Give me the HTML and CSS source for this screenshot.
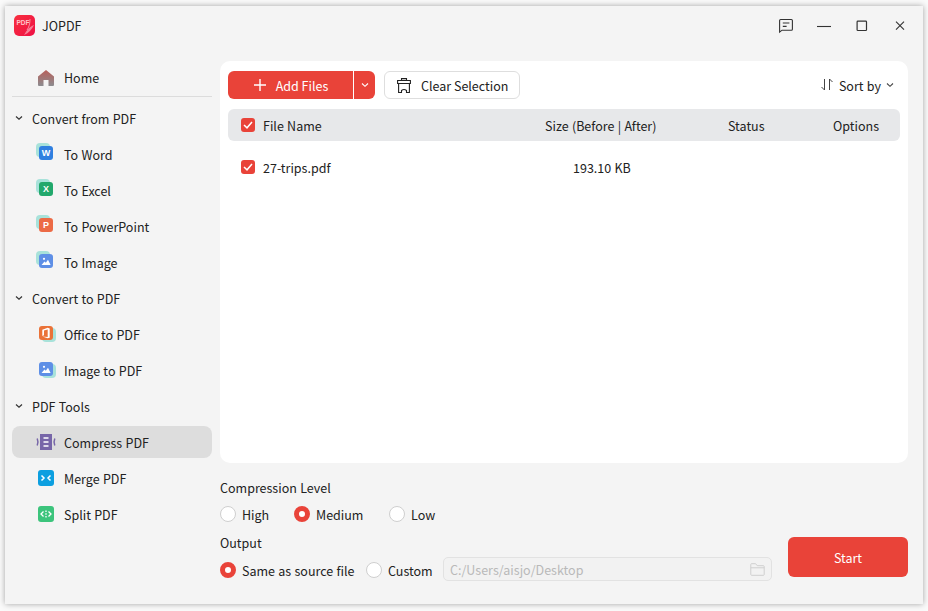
FILE: index.html
```html
<!DOCTYPE html>
<html lang="en">
<head>
    <meta charset="UTF-8">
    <meta name="viewport" content="width=device-width, initial-scale=1.0">
    <title>JOPDF</title>
    <link rel="stylesheet" href="styles.css">
</head>
<body>
    <div class="window">
        <!-- Title bar -->
        <header class="titlebar">
            <div class="logo">
                <svg width="21" height="21" viewBox="0 0 21 21">
                    <defs>
                        <linearGradient id="logo-red" x1="0" y1="0" x2="1" y2="1">
                            <stop offset="0" stop-color="#f8303f"/>
                            <stop offset="1" stop-color="#ee1045"/>
                        </linearGradient>
                    </defs>
                    <rect width="21" height="21" rx="5" fill="url(#logo-red)"/>
                    <path d="M10 20c3-5 5-8 10-10-2 4-5 8-10 10z" fill="#fff" opacity=".45"/>
                    <path d="M13 15c2-3 3-6 3-11" stroke="#fff" stroke-width=".8" fill="none" opacity=".6"/>
                    <text x="2.4" y="9.8" class="logo-text">PDF</text>
                </svg>
            </div>
            <span class="app-name">JOPDF</span>
            <div class="win-controls">
                <svg width="16" height="16" viewBox="0 0 16 16" fill="none" stroke="#333" stroke-width="1.1">
                    <path d="M1.6 14.2V2.5q0-1 1-1h10.8q1 0 1 1v8.7q0 1-1 1H4z"/>
                    <path d="M4.8 5h6.6M4.8 8.4h3.8"/>
                </svg>
                <svg width="16" height="16" viewBox="0 0 16 16" fill="none" stroke="#333" stroke-width="1.1">
                    <path d="M1 8.5h14"/>
                </svg>
                <svg width="16" height="16" viewBox="0 0 16 16" fill="none" stroke="#333" stroke-width="1.2">
                    <rect x="3.1" y="3.1" width="9.4" height="9.4" rx=".8"/>
                </svg>
                <svg width="16" height="16" viewBox="0 0 16 16" fill="none" stroke="#333" stroke-width="1.1">
                    <path d="M4 3.6l8 8M12 3.6l-8 8"/>
                </svg>
            </div>
        </header>

        <div class="content">
            <!-- Sidebar -->
            <nav class="sidebar">
                <div class="nav-item home">
                    <svg class="nav-icon" width="16" height="16" viewBox="0 0 16 16">
                        <defs>
                            <linearGradient id="home-grad" x1="0" y1="0" x2="0" y2="1">
                                <stop offset="0" stop-color="#b8605a"/>
                                <stop offset="1" stop-color="#8c8c90"/>
                            </linearGradient>
                        </defs>
                        <path d="M8 0l8 6.4V15a1 1 0 0 1-1 1h-4.500v-6h-5v6H1a1 1 0 0 1-1-1V6.400z" fill="url(#home-grad)"/>
                    </svg>
                    <span>Home</span>
                </div>

                <div class="group-title">
                    <svg class="chevron" width="8" height="6" viewBox="0 0 8 6"><path d="M1 1.5l3 2.800 3-2.800" fill="none" stroke="#333" stroke-width="1.2"/></svg>
                    <span>Convert from PDF</span>
                </div>
                <div class="nav-item">
                    <span class="doc-icon back-tl"><i class="tile word">W</i></span>
                    <span>To Word</span>
                </div>
                <div class="nav-item">
                    <span class="doc-icon back-tl"><i class="tile excel">X</i></span>
                    <span>To Excel</span>
                </div>
                <div class="nav-item">
                    <span class="doc-icon back-tl"><i class="tile ppt">P</i></span>
                    <span>To PowerPoint</span>
                </div>
                <div class="nav-item">
                    <span class="doc-icon back-tl">
                        <i class="tile image">
                            <svg width="14" height="14" viewBox="0 0 14 14"><circle cx="5" cy="4.800" r="1.100" fill="#fff"/><path d="M2.5 11l3-3.500 1.300 1.300L9 5.800l2.600 5.200z" fill="#fff"/></svg>
                        </i>
                    </span>
                    <span>To Image</span>
                </div>

                <div class="group-title">
                    <svg class="chevron" width="8" height="6" viewBox="0 0 8 6"><path d="M1 1.5l3 2.800 3-2.800" fill="none" stroke="#333" stroke-width="1.2"/></svg>
                    <span>Convert to PDF</span>
                </div>
                <div class="nav-item">
                    <span class="doc-icon back-br">
                        <i class="tile office">
                            <svg width="14" height="14" viewBox="0 0 14 14"><path d="M3.300 3.700L8.700 1.800l2 .6v9.300l-2 .6-5.400-1.900 5.400.6V3.500L5 4.400v4.800l-1.700.7z" fill="#fff"/></svg>
                        </i>
                    </span>
                    <span>Office to PDF</span>
                </div>
                <div class="nav-item">
                    <span class="doc-icon back-br">
                        <i class="tile image">
                            <svg width="14" height="14" viewBox="0 0 14 14"><circle cx="5" cy="4.800" r="1.100" fill="#fff"/><path d="M2.5 11l3-3.500 1.300 1.300L9 5.800l2.600 5.200z" fill="#fff"/></svg>
                        </i>
                    </span>
                    <span>Image to PDF</span>
                </div>

                <div class="group-title">
                    <svg class="chevron" width="8" height="6" viewBox="0 0 8 6"><path d="M1 1.5l3 2.800 3-2.800" fill="none" stroke="#333" stroke-width="1.2"/></svg>
                    <span>PDF Tools</span>
                </div>
                <div class="nav-item active">
                    <svg class="nav-icon" width="20" height="16" viewBox="0 0 20 16">
                        <rect x="4" y="0" width="12" height="16" fill="#7766a8"/>
                        <path d="M7.500 4h5M7.500 8h5M7.500 12h5" stroke="#fff" stroke-width="1.500"/>
                        <path d="M1.200 4.500q1.500 3.500 0 7M18.800 4.500q-1.500 3.500 0 7" fill="none" stroke="#7766a8" stroke-width="1.500"/>
                    </svg>
                    <span>Compress PDF</span>
                </div>
                <div class="nav-item">
                    <svg class="nav-icon" width="16" height="16" viewBox="0 0 16 16">
                        <rect width="16" height="16" rx="3" fill="#0c9fe0"/>
                        <path d="M3.500 5.500L6 8l-2.500 2.500M12.500 5.500L10 8l2.500 2.500" fill="none" stroke="#fff" stroke-width="1.500"/>
                    </svg>
                    <span>Merge PDF</span>
                </div>
                <div class="nav-item">
                    <svg class="nav-icon" width="16" height="16" viewBox="0 0 16 16">
                        <rect width="16" height="16" rx="3" fill="#3cc47c"/>
                        <path d="M5.500 5.500L3 8l2.500 2.500M10.500 5.500L13 8l-2.500 2.500M8 4.500v1.500M8 7.200v1.600M8 10v1.500" fill="none" stroke="#fff" stroke-width="1.300"/>
                    </svg>
                    <span>Split PDF</span>
                </div>
            </nav>

            <main class="main">
                <section class="panel">
                    <div class="toolbar">
                        <div class="add-group">
                            <button class="add-btn">
                                <svg width="14" height="14" viewBox="0 0 14 14"><path d="M7 1v12M1 7h12" stroke="#fff" stroke-width="1.400"/></svg>
                                <span>Add Files</span>
                            </button>
                            <button class="add-more">
                                <svg width="8" height="6" viewBox="0 0 8 6"><path d="M1 1.5l3 2.800 3-2.800" fill="none" stroke="#fff" stroke-width="1.100"/></svg>
                            </button>
                        </div>
                        <button class="clear-btn">
                            <svg width="14" height="15" viewBox="0 0 14 15" fill="none" stroke="#222" stroke-width="1.100">
                                <path d="M4.500 2.500V.6h5v1.900M.6 2.500h12.800v3H.6zM1.600 5.500v9h2.900v-2q2.500-2 5 0v2h2.900v-9"/>
                            </svg>
                            <span>Clear Selection</span>
                        </button>
                        <div class="sort">
                            <svg width="14" height="12" viewBox="0 0 14 12" fill="none" stroke="#444" stroke-width="1">
                                <path d="M4.500 0v11L1.500 8M9.500 11V0l3 3"/>
                            </svg>
                            <span>Sort by</span>
                            <svg width="8" height="6" viewBox="0 0 8 6"><path d="M1 1.5l3 2.800 3-2.800" fill="none" stroke="#444" stroke-width="1.100"/></svg>
                        </div>
                    </div>

                    <div class="file-row file-head">
                        <span class="check"><svg width="10" height="8" viewBox="0 0 10 8"><path d="M1 4l3 2.800L9 1" fill="none" stroke="#fff" stroke-width="1.500"/></svg></span>
                        <span class="col-name">File Name</span>
                        <span class="col-size">Size (Before | After)</span>
                        <span class="col-status">Status</span>
                        <span class="col-options">Options</span>
                    </div>
                    <div class="file-row">
                        <span class="check"><svg width="10" height="8" viewBox="0 0 10 8"><path d="M1 4l3 2.800L9 1" fill="none" stroke="#fff" stroke-width="1.500"/></svg></span>
                        <span class="col-name">27-trips.pdf</span>
                        <span class="col-size">193.10 KB</span>
                    </div>
                </section>

                <section class="settings">
                    <div class="settings-left">
                        <div class="label first">Compression Level</div>
                        <div class="radios level">
                            <span class="radio"></span><span class="radio-text high">High</span>
                            <span class="radio on"></span><span class="radio-text medium">Medium</span>
                            <span class="radio"></span><span class="radio-text">Low</span>
                        </div>
                        <div class="label">Output</div>
                        <div class="radios output">
                            <span class="radio on"></span><span class="radio-text same">Same as source file</span>
                            <span class="radio"></span><span class="radio-text custom">Custom</span>
                            <div class="path">
                                <span>C:/Users/aisjo/Desktop</span>
                                <svg width="15" height="13" viewBox="0 0 15 13" fill="none" stroke="#cfcfcf" stroke-width="1">
                                    <path d="M.8 11.500V1.500q0-.8.8-.8h4l1.600 2h6.200q.8 0 .8.800v8q0 .8-.8.800H1.600q-.8 0-.8-.8zM.8 4.800h13.400"/>
                                </svg>
                            </div>
                        </div>
                    </div>
                    <button class="start-btn">Start</button>
                </section>
            </main>
        </div>
    </div>
</body>
</html>
```

FILE: styles.css
```css
* {
    margin: 0;
    padding: 0;
    box-sizing: border-box;
}

body {
    width: 928px;
    height: 611px;
    padding: 6px 5px 7px;
    background: #fafafa;
    font-family: "Noto Sans CJK SC", "Noto Sans", sans-serif;
    font-size: 12.5px;
    word-spacing: 0.5px;
    color: #222;
    overflow: hidden;
}

.window {
    width: 918px;
    height: 598px;
    background: #f4f4f4;
    box-shadow: 0 0 6px rgba(0, 0, 0, 0.35);
}

.titlebar {
    height: 55px;
    padding: 9px 15px 0 9px;
    display: flex;
    align-items: flex-start;
}

.logo {
    width: 21px;
    height: 21px;
}

.logo-text {
    font-family: "Liberation Sans", sans-serif;
    font-size: 6.5px;
    font-weight: bold;
    fill: #ffc5cc;
}

.app-name {
    margin-left: 7px;
    line-height: 22px;
}

.win-controls {
    margin-left: auto;
    display: flex;
    gap: 22px;
    margin-top: 3px;
}

.content {
    display: flex;
    gap: 8px;
    padding: 0 15px 0 7px;
}

.sidebar {
    width: 200px;
    margin-top: -2px;
}

.nav-item {
    height: 36px;
    display: flex;
    align-items: center;
    padding-left: 26px;
    position: relative;
}

.nav-item > span:last-child {
    position: absolute;
    left: 52px;
}

.nav-item.active {
    height: 32px;
    margin: 2px 0;
    padding-left: 24px;
    background: #dddddd;
    border-radius: 8px;
}

.home {
    height: 38px;
    border-bottom: 1px solid #dcdcdc;
    margin-bottom: 3px;
}

.nav-icon {
    flex-shrink: 0;
}

.group-title {
    height: 36px;
    display: flex;
    align-items: center;
    gap: 9px;
    padding-left: 3px;
}

.chevron {
    margin-top: -1px;
}

.doc-icon {
    width: 17px;
    height: 17px;
    margin-left: 1px;
    position: relative;
    display: block;
}

.doc-icon::before {
    content: "";
    position: absolute;
    width: 14px;
    height: 14px;
    border-radius: 4px;
    background: #a8e2da;
}

.doc-icon.back-tl::before {
    left: -3px;
    top: -3px;
}

.doc-icon.back-br::before {
    left: 3px;
    top: 2px;
}

.tile {
    position: absolute;
    left: 0;
    top: 0;
    width: 14px;
    height: 14px;
    border-radius: 3px;
    display: flex;
    align-items: center;
    justify-content: center;
    color: #fff;
    font-style: normal;
    font-weight: bold;
    font-size: 9px;
    font-family: "Liberation Sans", sans-serif;
}

.word { background: #2f7fe0; }
.excel { background: #22a86c; }
.ppt { background: #ec6a45; }
.image { background: #5e8fe6; }
.office { background: #ea7238; }

.main {
    width: 688px;
}

.panel {
    height: 402px;
    background: #fff;
    border-radius: 10px;
    padding: 10px 8px;
}

.toolbar {
    height: 28px;
    display: flex;
    align-items: center;
    margin-bottom: 10px;
}

.add-group {
    display: flex;
    height: 28px;
}

.add-btn {
    width: 125px;
    background: #e94339;
    border: none;
    border-radius: 6px 0 0 6px;
    color: #fff;
    font: inherit;
    display: flex;
    align-items: center;
    justify-content: center;
    gap: 9px;
}

.add-more {
    width: 21px;
    margin-left: 1px;
    background: #e94339;
    border: none;
    border-radius: 0 6px 6px 0;
    display: flex;
    align-items: center;
    justify-content: center;
}

.clear-btn {
    margin-left: 9px;
    width: 136px;
    height: 28px;
    padding-left: 12px;
    background: #fff;
    border: 1px solid #dedede;
    border-radius: 6px;
    font: inherit;
    color: #222;
    display: flex;
    align-items: center;
    gap: 10px;
}

.sort {
    margin-left: auto;
    margin-right: 6px;
    display: flex;
    align-items: center;
    gap: 5px;
}

.file-row {
    height: 32px;
    padding-left: 13px;
    display: flex;
    align-items: center;
    position: relative;
    margin-top: 10px;
}

.file-head {
    margin-top: 0;
    background: #e7e8ea;
    border-radius: 6px;
}

.check {
    width: 14px;
    height: 14px;
    border-radius: 3px;
    background: #e94339;
    display: flex;
    align-items: center;
    justify-content: center;
}

.col-name {
    margin-left: 8px;
}

.col-size,
.col-status,
.col-options {
    position: absolute;
}

.col-size {
    left: 317px;
}

.file-row:not(.file-head) .col-size {
    left: 345px;
}

.col-status {
    left: 500px;
}

.col-options {
    left: 605px;
}

.settings {
    display: flex;
    justify-content: space-between;
    align-items: flex-end;
    padding-top: 15px;
}

.label {
    height: 20px;
    line-height: 20px;
    margin-top: 7px;
}

.label.first {
    margin-top: 0;
}

.radios {
    height: 24px;
    margin-top: 5px;
    display: flex;
    align-items: center;
}

.radios.level {
    margin-top: 4px;
}

.radio {
    width: 16px;
    height: 16px;
    margin-top: -1px;
    border-radius: 50%;
    background: #fff;
    border: 1px solid #cfcfcf;
    flex-shrink: 0;
}

.radio.on {
    background: #fff;
    border: 5px solid #e94339;
}

.radio-text {
    margin-left: 6px;
}

.high {
    width: 52px;
}

.medium {
    width: 73px;
}

.same {
    width: 124px;
}

.custom {
    width: 55px;
}

.path {
    width: 329px;
    height: 24px;
    margin-top: -2px;
    border: 1px solid #e2e2e2;
    border-radius: 5px;
    background: #f2f2f2;
    color: #b9b9b9;
    display: flex;
    align-items: center;
    justify-content: space-between;
    padding: 0 6px;
}

.start-btn {
    width: 120px;
    height: 40px;
    margin-bottom: 5px;
    background: #e94339;
    border: none;
    border-radius: 6px;
    color: #fff;
    font: inherit;
}
```
